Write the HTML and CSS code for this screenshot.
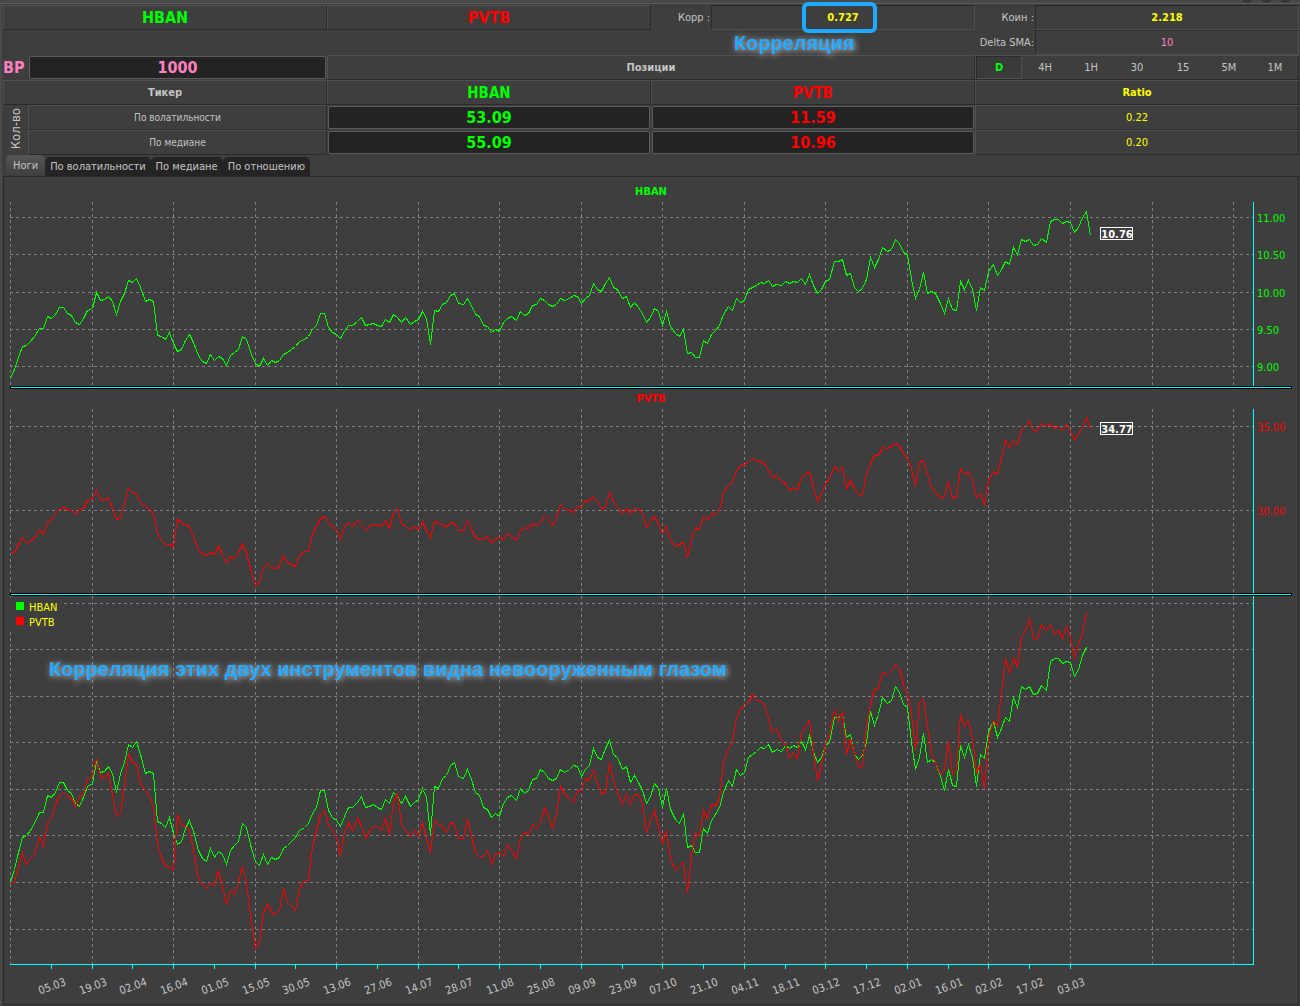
FILE: index.html
```html
<!DOCTYPE html>
<html lang="ru">
<head>
<meta charset="utf-8">
<title>HBAN / PVTB</title>
<link rel="stylesheet" href="styles.css">
</head>
<body>
<div class="titlebar">
  <svg class="window-buttons" width="56" height="3" viewBox="0 0 56 3" aria-hidden="true">
    <circle cx="8" cy="-4" r="6"/><circle cx="27" cy="-4" r="6"/><circle cx="46" cy="-4" r="6"/>
  </svg>
</div>
<main class="window">
  <section class="summary">
    <div class="cell raised ticker green">HBAN</div>
    <div class="cell raised ticker red">PVTB</div>
    <div class="field">
      <span class="field-label">Корр :</span>
      <output class="sunken strong yellow">0.727<span class="marker"></span><span class="note note-small">Корреляция</span></output>
    </div>
    <div class="field">
      <span class="field-label">Коин :</span>
      <output class="sunken strong yellow">2.218</output>
    </div>
    <div class="field last">
      <label class="field-label" for="sma">Delta SMA:</label>
      <input class="sunken pink" id="sma" value="10">
    </div>
    <div class="power">
      <label class="pink" for="bp">BP</label>
      <input class="dark pink" id="bp" value="1000">
    </div>
    <div class="cell raised strong wide">Позиции</div>
    <div class="frames raised">
      <button class="pressed" type="button">D</button>
      <button type="button">4H</button>
      <button type="button">1H</button>
      <button type="button">30</button>
      <button type="button">15</button>
      <button type="button">5M</button>
      <button type="button">1M</button>
    </div>
  </section>
  <table class="positions">
    <colgroup><col class="col-side"><col class="col-name"><col class="col"><col class="col"><col class="col"></colgroup>
    <thead>
      <tr>
        <th class="raised" colspan="2">Тикер</th>
        <th class="raised big green">HBAN</th>
        <th class="raised big red">PVTB</th>
        <th class="raised yellow">Ratio</th>
      </tr>
    </thead>
    <tbody>
      <tr>
        <th class="side" rowspan="2"><span>Кол-во</span></th>
        <th class="raised name">По волатильности</th>
        <td><input class="dark green" value="53.09" aria-label="HBAN по волатильности"></td>
        <td><input class="dark red" value="11.59" aria-label="PVTB по волатильности"></td>
        <td class="raised yellow">0.22</td>
      </tr>
      <tr>
        <th class="raised name">По медиане</th>
        <td><input class="dark green" value="55.09" aria-label="HBAN по медиане"></td>
        <td><input class="dark red" value="10.96" aria-label="PVTB по медиане"></td>
        <td class="raised yellow">0.20</td>
      </tr>
    </tbody>
  </table>
  <nav class="tabs">
    <button class="active" type="button">Ноги</button>
    <button type="button">По волатильности</button>
    <button type="button">По медиане</button>
    <button type="button">По отношению</button>
  </nav>
  <section class="charts">
    <h2 class="green">HBAN</h2>
    <svg id="chart-hban" class="chart" viewBox="0 0 1282 184"></svg>
    <div class="splitter"></div>
    <h2 class="red">PVTB</h2>
    <svg id="chart-pvtb" class="chart" viewBox="0 0 1282 184"></svg>
    <div class="splitter"></div>
    <div class="both">
      <svg id="chart-both" class="chart" viewBox="0 0 1282 408"></svg>
      <p class="note note-large">Корреляция этих двух инструментов видна невооруженным глазом</p>
    </div>
  </section>
</main>
<script src="charts.js"></script>
</body>
</html>
```
FILE: styles.css
```css
* { box-sizing: border-box; }

body {
  margin: 0;
  background: #3e3e3e;
  color: #c4c4c4;
  font: 11px/14px "DejaVu Sans Condensed", "DejaVu Sans", sans-serif;
}

input, button { font: inherit; color: inherit; margin: 0; }

.green { color: #0f0; }
.red { color: #f00; }
.yellow { color: #ff0; }
.pink { color: #ff80c0; }
.strong { font-weight: bold; }

.titlebar {
  display: flex;
  justify-content: flex-end;
  height: 4px;
  padding-right: 5px;
  background: #484848;
  border-bottom: 1px solid #5c5c5c;
}
.window-buttons { fill: #3a3a3a; stroke: #2a2a2a; }

.window {
  border-left: 2px solid #4a4a4a;
  padding: 1px 1px 0;
}

.raised {
  border: 1px solid;
  border-color: #505050 #2a2a2a #2a2a2a #505050;
}
.sunken {
  border: 1px solid;
  border-color: #2a2a2a #505050 #505050 #2a2a2a;
  background: none;
}

.summary {
  display: grid;
  grid-template-columns: repeat(4, 1fr);
  grid-auto-rows: 25px;
}
.cell { display: flex; align-items: center; justify-content: center; }
.ticker { font-size: 16px; font-weight: bold; }
.wide { grid-column: span 2; }

.field { display: grid; grid-template-columns: 60px 1fr; }
.field.last { grid-column: 4; }
.field-label { align-self: center; text-align: right; padding-right: 1px; white-space: nowrap; }
.field .sunken {
  position: relative;
  display: flex;
  align-items: center;
  justify-content: center;
  width: 100%;
  text-align: center;
}

.power { display: grid; grid-template-columns: 26px 1fr; align-items: center; padding: 1px 1px 1px 0; }
.power label { font-size: 16px; font-weight: bold; }

.dark {
  display: block;
  width: 100%;
  height: 23px;
  padding: 0;
  border: 1px solid #5c5c5c;
  border-radius: 2px;
  background: #232323;
  text-align: center;
  font-size: 16px;
  font-weight: bold;
}

.frames { display: grid; grid-template-columns: repeat(7, 1fr); }
.frames button { border: 1px solid transparent; background: none; padding: 0; }
.frames .pressed {
  border-color: #2a2a2a #505050 #505050 #2a2a2a;
  background: #3a3a3a;
  color: #0f0;
  font-weight: bold;
}

.positions { width: 100%; table-layout: fixed; border-collapse: separate; border-spacing: 0; }
.positions tr { height: 25px; }
.positions th, .positions td { padding: 0; text-align: center; }
.positions td:not(.raised) { padding: 0 1px; }
.positions .big { font-size: 15px; }
.positions .name { font-weight: normal; font-size: 10px; }
.col-side { width: 25px; }
.col-name { width: calc(25% - 25px); }
.col { width: 25%; }
.side { font-weight: normal; font-size: 13px; }
.side span { writing-mode: vertical-rl; transform: rotate(180deg); }

.tabs { display: flex; align-items: flex-end; height: 21px; padding-left: 3px; }
.tabs button {
  height: 19px;
  padding: 0 5px;
  border: 0;
  border-radius: 5px 5px 0 0;
  background: #242424;
  white-space: nowrap;
}
.tabs .active { height: 21px; padding: 0 7px; background: linear-gradient(#565656, #3e3e3e); }

.charts {
  border: 1px solid #2a2a2a;
  padding: 0 6px 0;
}
.charts h2 {
  margin: 0;
  padding-bottom: 1px;
  font-size: 11px;
  line-height: 19px;
  text-align: center;
}
.charts h2:first-child { padding-top: 5px; }
.splitter { height: 3px; background: #0ff; border: 1px solid #000; }
.chart { display: block; width: 100%; overflow: visible; font-size: 11px; }
.both { position: relative; }

.grid { fill: none; stroke: #808080; stroke-dasharray: 3 3; shape-rendering: crispEdges; }
.axis { fill: none; stroke: #0ff; shape-rendering: crispEdges; }
.line { fill: none; shape-rendering: crispEdges; }
.line-green { stroke: #0f0; }
.line-red { stroke: #f00; }
.tick-green, .swatch-green { fill: #0f0; }
.tick-red, .swatch-red { fill: #f00; }
.tick-date { fill: #c4c4c4; text-anchor: middle; }
.last-box { fill: #3e3e3e; stroke: #fff; shape-rendering: crispEdges; }
.last-text { fill: #fff; font-weight: bold; text-anchor: middle; }
.legend-back { fill: #3e3e3e; }
.legend-text { fill: #ff0; }

.marker {
  position: absolute;
  left: 90px;
  top: -4px;
  width: 75px;
  height: 31px;
  border: 4px solid #1eaaff;
  border-radius: 6px;
}
.note {
  position: absolute;
  margin: 0;
  color: #22aaff;
  font-family: "Liberation Sans", Arial, sans-serif;
  font-weight: bold;
  font-size: 20px;
  line-height: 24px;
  white-space: nowrap;
  text-shadow: 1px 1px 6px #ccc;
}
.note-small { left: 22px; top: 25px; }
.note-large { left: 39px; top: 61px; }
```
FILE: charts.js
```js
// Screen levels of each daily bar, top of the window = 0.
const HBAN = [
  378,369,357,346,345,341,336,328,328,316,318,314,307,307,313,315,322,324,318,310,
  308,292,300,299,296,301,314,301,293,280,282,278,287,301,299,301,335,336,339,332,
  343,351,349,340,334,342,355,361,363,354,360,356,358,365,355,352,349,336,339,354,
  363,366,358,365,360,362,360,354,352,349,346,341,339,336,329,325,313,313,327,332,
  334,338,331,325,325,321,317,325,324,323,325,326,319,322,314,317,322,317,324,321,
  319,311,318,344,310,311,304,302,295,293,303,304,298,305,314,316,325,326,332,329,
  331,322,318,316,320,311,315,313,305,304,298,300,304,306,304,298,300,298,295,296,
  303,298,295,283,289,291,283,277,287,289,298,296,307,302,307,313,322,317,308,311,
  325,311,326,333,336,329,353,352,357,357,340,343,334,330,325,314,306,310,298,302,
  300,289,287,285,282,283,280,286,284,285,281,283,281,282,278,284,274,285,293,289,
  281,279,261,261,259,275,273,287,291,288,279,257,267,259,247,251,249,239,243,252,
  254,279,298,289,272,293,291,293,303,313,298,309,310,281,289,280,289,310,287,290,
  271,264,275,269,261,264,247,254,239,241,239,245,244,238,242,221,219,219,223,221,
  222,232,227,217,211,235];

const PVTB = [
  552,552,544,537,543,540,538,529,534,522,520,513,509,507,509,510,514,509,508,500,
  499,490,499,500,497,508,519,517,503,488,492,493,503,506,509,514,533,540,544,544,
  546,518,523,524,526,536,550,553,555,552,554,546,554,563,556,558,552,544,552,572,
  585,582,567,563,567,568,566,555,562,564,566,555,551,551,534,526,518,516,523,526,
  529,539,527,522,526,520,524,530,526,524,524,526,520,528,512,508,523,526,529,526,
  529,522,530,537,521,523,524,527,522,523,530,530,520,529,537,539,539,536,543,538,
  537,539,533,536,540,530,527,528,523,525,522,515,519,525,518,504,508,510,512,506,
  506,500,501,496,502,508,507,492,501,507,513,508,513,508,508,513,527,521,516,524,
  533,526,540,546,544,542,557,539,527,529,516,520,513,514,510,492,485,482,470,465,
  464,462,458,461,461,463,470,477,475,481,483,490,487,490,477,474,471,487,501,493,
  483,478,466,471,467,488,480,488,494,494,474,463,455,455,447,448,446,443,445,453,
  458,468,486,462,460,474,487,492,498,496,481,498,496,468,474,471,480,497,493,505,
  480,471,474,457,440,447,440,444,429,426,420,430,430,423,426,423,428,426,430,424,
  430,440,433,427,417,429];

const DATES = ["05.03","19.03","02.04","16.04","01.05","15.05","30.05","13.06","27.06",
  "14.07","28.07","11.08","25.08","09.09","23.09","07.10","21.10","04.11","18.11",
  "03.12","17.12","02.01","16.01","02.02","17.02","03.03"];

const STEP = 4.077;
const AXIS_X = 1243;

const barX = i => Math.round(i * STEP);

function add(svg, name, attrs, text) {
  const el = document.createElementNS("http://www.w3.org/2000/svg", name);
  for (const key in attrs) el.setAttribute(key, attrs[key]);
  if (text) el.textContent = text;
  svg.appendChild(el);
}

function grid(svg, rows, height) {
  let d = "";
  for (const y of rows) d += `M0 ${y + 0.5}H${AXIS_X}`;
  for (let i = 0; i < 16; i++) d += `M${barX(i * 20) + 0.5} 0V${height}`;
  add(svg, "path", { class: "grid", d });
}

function line(svg, values, toY, color) {
  const points = values.map((v, i) => `${barX(i) + 0.5},${Math.round(toY(v)) + 0.5}`);
  add(svg, "polyline", { class: `line line-${color}`, points: points.join(" ") });
}

function single(id, values, top, color, ticks, last, lastY) {
  const svg = document.getElementById(id);
  grid(svg, ticks.map(t => t[1]), 184);
  line(svg, values, v => v - top, color);
  add(svg, "path", { class: "axis", d: `M${AXIS_X + 0.5} 0V184` });
  for (const [text, y] of ticks) add(svg, "text", { class: `tick-${color}`, x: AXIS_X + 4, y: y + 5 }, text);
  add(svg, "rect", { class: "last-box", x: 1090.5, y: lastY + 0.5, width: 32, height: 12 });
  add(svg, "text", { class: "last-text", x: 1107, y: lastY + 11 }, last);
}

single("chart-hban", HBAN, 202, "green",
  [["11.00", 15], ["10.50", 52], ["10.00", 90], ["9.50", 127], ["9.00", 164]], "10.76", 25);
single("chart-pvtb", PVTB, 409, "red", [["35.00", 17], ["30.00", 101]], "34.77", 13);

const both = document.getElementById("chart-both");
grid(both, [7, 53, 100, 146, 193, 239, 286, 333], 368);
add(both, "rect", { class: "legend-back", x: -1, y: 1, width: 54, height: 35 });
add(both, "rect", { class: "swatch-green", x: 6, y: 6, width: 8, height: 8 });
add(both, "text", { class: "legend-text", x: 19, y: 15 }, "HBAN");
add(both, "rect", { class: "swatch-red", x: 6, y: 21, width: 8, height: 8 });
add(both, "text", { class: "legend-text", x: 19, y: 30 }, "PVTB");
line(both, HBAN.slice(0, -1), v => 286 + (v - 378) * 1.41, "green");
line(both, PVTB.slice(0, -1), v => 286 + (v - 552) * 2, "red");

let axis = `M0 368.5H${AXIS_X + 0.5}V0`;
DATES.forEach((date, i) => {
  const x = barX((i + 1) * 10);
  axis += `M${x + 0.5} 368V373`;
  add(both, "text", { class: "tick-date", x: 0, y: 4, transform: `translate(${x + 1} 390) rotate(-20)` }, date);
});
add(both, "path", { class: "axis", d: axis });
```
